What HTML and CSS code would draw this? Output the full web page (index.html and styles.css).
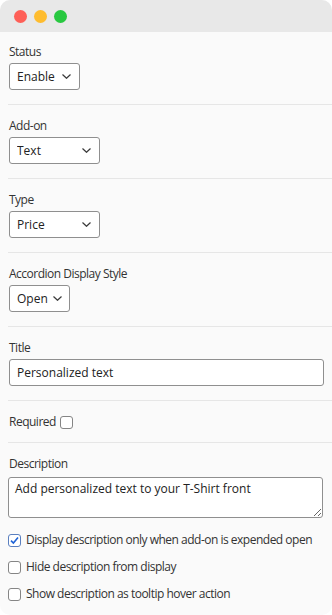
FILE: index.html
```html
<!DOCTYPE html>
<html lang="en">
<head>
    <meta charset="UTF-8">
    <meta name="viewport" content="width=device-width, initial-scale=1.0">
    <title>Add-on settings</title>
    <link rel="stylesheet" href="styles.css">
</head>
<body>
    <div class="window">
        <div class="titlebar">
            <span class="dot dot-red"></span>
            <span class="dot dot-yellow"></span>
            <span class="dot dot-green"></span>
        </div>

        <div class="panel">
            <div class="field field-first">
                <label for="status">Status</label>
                <span class="select-wrap">
                    <select id="status" class="select-status">
                        <option>Enable</option>
                        <option>Disable</option>
                    </select>
                    <svg class="chevron" width="9" height="5" viewBox="0 0 9 5"><path d="M0.5 0.5 L4.5 4.3 L8.5 0.5" fill="none" stroke="#3b3b3b" stroke-width="1.2"/></svg>
                </span>
            </div>

            <div class="field">
                <label for="addon">Add-on</label>
                <span class="select-wrap">
                    <select id="addon" class="select-wide">
                        <option>Text</option>
                        <option>Textarea</option>
                        <option>Checkbox</option>
                    </select>
                    <svg class="chevron" width="9" height="5" viewBox="0 0 9 5"><path d="M0.5 0.5 L4.5 4.3 L8.5 0.5" fill="none" stroke="#3b3b3b" stroke-width="1.2"/></svg>
                </span>
            </div>

            <div class="field">
                <label for="type">Type</label>
                <span class="select-wrap">
                    <select id="type" class="select-wide">
                        <option>Price</option>
                        <option>Percentage</option>
                    </select>
                    <svg class="chevron" width="9" height="5" viewBox="0 0 9 5"><path d="M0.5 0.5 L4.5 4.3 L8.5 0.5" fill="none" stroke="#3b3b3b" stroke-width="1.2"/></svg>
                </span>
            </div>

            <div class="field">
                <label for="accordion">Accordion Display Style</label>
                <span class="select-wrap">
                    <select id="accordion" class="select-open">
                        <option>Open</option>
                        <option>Closed</option>
                    </select>
                    <svg class="chevron" width="9" height="5" viewBox="0 0 9 5"><path d="M0.5 0.5 L4.5 4.3 L8.5 0.5" fill="none" stroke="#3b3b3b" stroke-width="1.2"/></svg>
                </span>
            </div>

            <div class="field">
                <label for="title">Title</label>
                <input type="text" id="title" class="text-input" value="Personalized text">
            </div>

            <div class="field field-inline">
                <label for="required">Required</label>
                <input type="checkbox" id="required" class="box">
            </div>

            <div class="field field-last">
                <label for="description">Description</label>
                <textarea id="description" rows="2">Add personalized text to your T-Shirt front</textarea>

                <div class="checks">
                    <label class="check"><input type="checkbox" class="box" checked> Display description only when add-on is expended open</label>
                    <label class="check"><input type="checkbox" class="box"> Hide description from display</label>
                    <label class="check"><input type="checkbox" class="box"> Show description as tooltip hover action</label>
                </div>
            </div>
        </div>
    </div>
</body>
</html>
```

FILE: styles.css
```css
body {
    margin: 0;
    background: #ffffff;
    font-family: "Open Sans", "Noto Sans", sans-serif;
    font-size: 12px;
    letter-spacing: -0.5px;
    color: #333333;
}

.window {
    height: 615px;
    background: #fafafa;
    border-radius: 10px;
    overflow: hidden;
}

.titlebar {
    height: 32px;
    background: #e8e8e8;
    display: flex;
    align-items: center;
    gap: 7px;
    padding-left: 14px;
}

.dot {
    width: 13px;
    height: 13px;
    border-radius: 50%;
}

.dot-red { background: #fe5f57; }
.dot-yellow { background: #febc2e; }
.dot-green { background: #28c840; }

.panel {
    padding-left: 8px;
}

.field {
    padding: 13px 0 14px;
    border-bottom: 1px solid #e6e6e6;
}

.field-first {
    padding-top: 12px;
}

.field > label {
    display: block;
    line-height: 16px;
    margin-bottom: 3px;
    padding-left: 1px;
}

select,
input,
textarea {
    font: inherit;
    letter-spacing: 0;
    color: #222222;
}

.select-wrap {
    position: relative;
    display: inline-block;
    margin-left: 1px;
}

select {
    display: block;
    height: 27px;
    padding: 0 0 0 7px;
    border: 1px solid #8f8f8f;
    border-radius: 3px;
    background: #ffffff;
    appearance: none;
    -webkit-appearance: none;
}

.chevron {
    position: absolute;
    right: 9px;
    top: 11px;
    pointer-events: none;
}

.select-status { width: 71px; }
.select-wide { width: 91px; }
.select-open { width: 61px; }

.select-open + .chevron {
    right: 8px;
}

.text-input {
    width: 315px;
    height: 27px;
    margin-left: 1px;
    padding: 0 7px;
    box-sizing: border-box;
    border: 1px solid #8f8f8f;
    border-radius: 3px;
    background: #ffffff;
}

.box {
    appearance: none;
    -webkit-appearance: none;
    margin: 0;
    width: 13px;
    height: 13px;
    flex: none;
    box-sizing: border-box;
    border: 1px solid #858585;
    border-radius: 3px;
    background: #ffffff;
}

.box:checked {
    border-color: #5a7fbf;
    background: #ffffff url("data:image/svg+xml,%3Csvg xmlns='http://www.w3.org/2000/svg' width='11' height='11' viewBox='0 0 11 11'%3E%3Cpath d='M2 5.6 L4.4 8 L9 2.6' fill='none' stroke='%231f63d6' stroke-width='1.6'/%3E%3C/svg%3E") no-repeat center;
}

.field-inline {
    display: flex;
    align-items: center;
    gap: 4px;
    padding: 13px 0 12px;
}

.field-inline > label {
    display: inline;
    margin: 0;
}

.field-last {
    border-bottom: none;
}

.field-last > label {
    margin-bottom: 5px;
}

textarea {
    display: block;
    width: 315px;
    height: 41px;
    box-sizing: border-box;
    padding: 2px 6px;
    border: 1px solid #8f8f8f;
    border-radius: 3px;
    background: #ffffff;
    resize: vertical;
}

.checks {
    margin-top: 14px;
    display: flex;
    flex-direction: column;
    gap: 11px;
}

.check {
    display: flex;
    align-items: center;
    gap: 5px;
    line-height: 16px;
    white-space: nowrap;
}
```
